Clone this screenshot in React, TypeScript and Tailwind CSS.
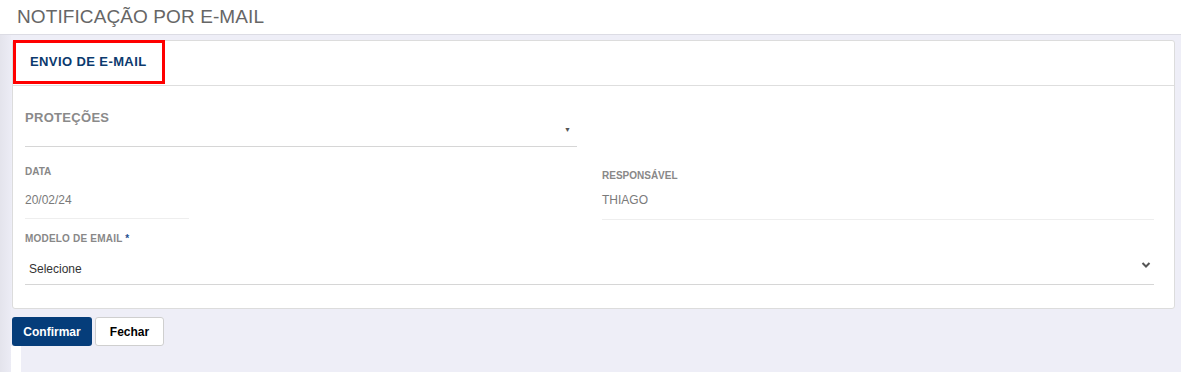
import React from 'react';

const App: React.FC = () => {
  return (
    <div className="w-[1181px] h-[372px] overflow-hidden bg-[#eeeef7] font-['Liberation_Sans',Arial,sans-serif] flex">
      <div className="w-[11px] shrink-0 bg-gradient-to-r from-[#e4e4ec] to-[#ececf5]" />
      <div className="flex-1 flex flex-col min-h-0">
        <div className="h-[35px] shrink-0 -ml-[11px] pl-[17px] bg-white border-b border-[#dcdce4] flex items-center">
          <h1 className="text-[19px] text-[#666] tracking-[0.1px] mt-[1px]">NOTIFICAÇÃO POR E-MAIL</h1>
        </div>
        <div className="flex shrink-0">
          <div className="flex-1 flex flex-col pr-[6px]">
            <div className="mt-[5px] ml-[1px] shrink-0 bg-white border border-[#dcdcdc] rounded-[3px] h-[269px] flex flex-col">
              <div className="h-[45px] shrink-0 border-b border-[#dedede] flex">
                <div className="w-[152px] h-[44px] border-[3px] border-[#f00] flex items-center pl-[14px] -mt-[1px]">
                  <span className="text-[13px] font-bold text-[#0b3a6e] tracking-[0.4px]">ENVIO DE E-MAIL</span>
                </div>
              </div>
              <div className="flex flex-col px-[12px]">
                <div className="w-[552px] mt-[24px] h-[37px] border-b border-[#d6d6d6] relative">
                  <div className="text-[13px] font-bold text-[#8a8a8a] tracking-[0.3px] leading-[16px]">PROTEÇÕES</div>
                  <span className="absolute right-[6px] top-[15px] text-[7px] text-[#555]">▼</span>
                </div>
                <div className="flex mt-[19px]">
                  <div className="w-[577px] flex flex-col">
                    <div className="text-[10px] font-bold text-[#888] leading-[12px]">DATA</div>
                    <div className="w-[164px] h-[41px] border-b border-[#eeeeee] pt-[15px] text-[12px] text-[#7a7a7a] leading-[14px]">20/02/24</div>
                  </div>
                  <div className="flex-1 flex flex-col pr-[8px] pt-[4px]">
                    <div className="text-[10px] font-bold text-[#888] leading-[12px]">RESPONSÁVEL</div>
                    <div className="h-[38px] border-b border-[#eeeeee] pt-[11px] text-[12px] text-[#7a7a7a] leading-[14px]">THIAGO</div>
                  </div>
                </div>
                <div className="mt-[13px] mr-[8px] flex flex-col">
                  <div className="text-[10px] font-bold text-[#888] leading-[12px] tracking-[0.2px]">
                    MODELO DE EMAIL <span className="text-[#1f4f8f]">*</span>
                  </div>
                  <div className="h-[40px] border-b border-[#d6d6d6] flex items-start justify-between pl-[4px] pr-[3px] pt-[17px]">
                    <span className="text-[12px] text-[#333] leading-[14px]">Selecione</span>
                    <svg width="10" height="8" viewBox="0 0 10 8" className="-mt-[1px]">
                      <path d="M1.5 2 L5 5.5 L8.5 2" fill="none" stroke="#555" strokeWidth="2" />
                    </svg>
                  </div>
                </div>
              </div>
            </div>
            <div className="flex shrink-0 gap-[3px] mt-[8px] ml-[1px]">
              <button className="w-[80px] h-[29px] bg-[#053d7a] rounded-[3px] text-white text-[12px] font-bold">Confirmar</button>
              <button className="w-[69px] h-[29px] bg-white border border-[#cfcfcf] rounded-[3px] text-black text-[12px] font-bold">Fechar</button>
            </div>
            <div className="w-[10px] h-[40px] shrink-0 bg-white" />
          </div>
        </div>
      </div>
    </div>
  );
};

export default App;
